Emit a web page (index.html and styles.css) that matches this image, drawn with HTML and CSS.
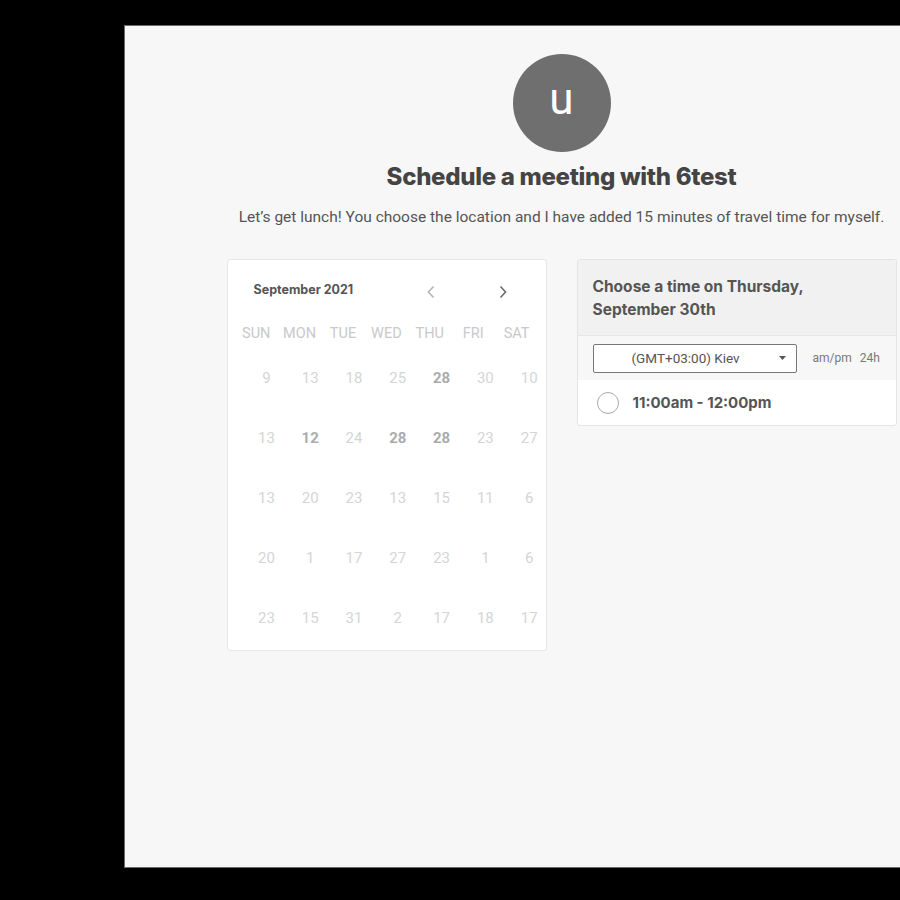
FILE: index.html
```html
<!DOCTYPE html>
<html>
<head>
<meta charset="utf-8">
<link rel="stylesheet" href="styles.css">
</head>
<body>
<div class="panel">
  <div class="avatar">u</div>
  <h1 class="title">Schedule a meeting with 6test</h1>
  <p class="subtitle">Let’s get lunch! You choose the location and I have added 15 minutes of travel time for myself.</p>
  <div class="cards">
    <div class="cal">
      <div class="cal-head">
        <span class="month">September 2021</span>
        <span class="arrow prev"><svg width="12" height="14" viewBox="0 0 12 14"><path d="M8.5 1.5 3.5 7l5 5.5" fill="none" stroke="#b5b5b5" stroke-width="1.6"/></svg></span>
        <span></span>
        <span class="arrow next"><svg width="12" height="14" viewBox="0 0 12 14"><path d="M3.5 1.5 8.5 7l-5 5.5" fill="none" stroke="#6a6a6a" stroke-width="1.6"/></svg></span>
      </div>
      <div class="dow">
        <span>SUN</span><span>MON</span><span>TUE</span><span>WED</span><span>THU</span><span>FRI</span><span>SAT</span>
      </div>
      <div class="days">
        <span>9</span><span>13</span><span>18</span><span>25</span><span class="b">28</span><span>30</span><span>10</span>
        <span>13</span><span class="b">12</span><span>24</span><span class="b">28</span><span class="b">28</span><span>23</span><span>27</span>
        <span>13</span><span>20</span><span>23</span><span>13</span><span>15</span><span>11</span><span>6</span>
        <span>20</span><span>1</span><span>17</span><span>27</span><span>23</span><span>1</span><span>6</span>
        <span>23</span><span>15</span><span>31</span><span>2</span><span>17</span><span>18</span><span>17</span>
      </div>
    </div>
    <div class="times">
      <div class="times-head">Choose a time on Thursday, September 30th</div>
      <div class="tz-row">
        <div class="select">
          <span>(GMT+03:00) Kiev</span>
          <svg class="caret" width="8" height="4" viewBox="0 0 8 4"><path d="M0 0h7L3.5 4z" fill="#555"/></svg>
        </div>
        <span class="fmt">am/pm</span>
        <span class="fmt fmt2">24h</span>
      </div>
      <div class="slot">
        <span class="radio"></span>
        <span class="slot-text">11:00am - 12:00pm</span>
      </div>
    </div>
  </div>
</div>
</body>
</html>
```
FILE: styles.css
```css
html, body {
  margin: 0;
  padding: 0;
  background: #000;
  overflow: hidden;
  width: 900px;
  height: 900px;
}
.panel {
  margin: 25px 0 0 124px;
  width: 875px;
  height: 843px;
  background: #f7f7f7;
  border: 1px solid #6a6a6a;
  display: flex;
  flex-direction: column;
  align-items: center;
  padding-top: 28px;
  box-sizing: border-box;
  font-family: Roboto, "Liberation Sans", sans-serif;
}
.avatar {
  width: 98px;
  height: 98px;
  border-radius: 50%;
  background: #6f6f6f;
  color: #fff;
  font-family: Roboto, sans-serif;
  font-size: 44px;
  line-height: 90px;
  text-align: center;
}
.title {
  margin: 11px 0 0;
  font-family: Inter, "Open Sans", sans-serif;
  font-weight: 800;
  font-size: 24px;
  line-height: 28px;
  color: #444;
  letter-spacing: -0.3px;
}
.subtitle {
  margin: 17px 0 0;
  font-size: 15.5px;
  line-height: 18px;
  color: #555;
}
.cards {
  margin-top: 33px;
  display: flex;
  gap: 30px;
  align-items: flex-start;
}
.cal {
  width: 320px;
  height: 392px;
  box-sizing: border-box;
  background: #fff;
  border: 1px solid #e7e7e7;
  border-radius: 3px;
  padding: 19px 0 0 7px;
}
.cal-head {
  display: grid;
  grid-template-columns: 184px 24px 48px 24px;
  height: 20px;
  align-items: center;
}
.month {
  padding-left: 19px;
  font-family: Inter, sans-serif;
  font-weight: 700;
  font-size: 12.5px;
  color: #555;
}
.arrow {
  display: flex;
  justify-content: center;
  margin-top: 6px;
}
.dow {
  margin-top: 24px;
  display: grid;
  grid-template-columns: repeat(7, 43.4px);
  height: 20px;
  align-items: center;
  text-align: center;
  font-size: 14.5px;
  color: #c9c9c9;
}
.days {
  margin: 5px 0 0 10px;
  display: grid;
  grid-template-columns: repeat(7, 43.8px);
  grid-auto-rows: 60px;
  align-items: center;
  text-align: center;
  font-size: 15px;
  color: #d5d5d5;
}
.days .b {
  font-weight: 700;
  color: #ababab;
}
.times {
  width: 320px;
  box-sizing: border-box;
  background: #fff;
  border: 1px solid #e4e4e4;
  border-radius: 3px;
  overflow: hidden;
}
.times-head {
  height: 76px;
  box-sizing: border-box;
  background: #f1f1f1;
  border-bottom: 1px solid #e6e6e6;
  padding: 15px 60px 0 15px;
  font-family: Inter, sans-serif;
  font-weight: 700;
  font-size: 15.5px;
  line-height: 23px;
  color: #555;
}
.tz-row {
  height: 44px;
  background: #f7f7f7;
  display: flex;
  align-items: center;
  padding-left: 15px;
}
.select {
  width: 204px;
  height: 29px;
  box-sizing: border-box;
  background: #fff;
  border: 1px solid #777;
  border-radius: 2px;
  display: flex;
  align-items: center;
  padding-left: 38px;
  font-size: 13.5px;
  color: #555;
}
.caret {
  margin-left: auto;
  margin-right: 9px;
}
.fmt {
  margin-left: 16px;
  font-size: 12px;
  color: #777;
}
.fmt2 {
  margin-left: 8px;
}
.slot {
  height: 45px;
  display: flex;
  align-items: center;
  padding-left: 19px;
}
.radio {
  width: 22px;
  height: 22px;
  box-sizing: border-box;
  border: 1.5px solid #aaa;
  border-radius: 50%;
}
.slot-text {
  margin-left: 14px;
  font-family: Inter, sans-serif;
  font-weight: 700;
  font-size: 15px;
  color: #555;
}
```
